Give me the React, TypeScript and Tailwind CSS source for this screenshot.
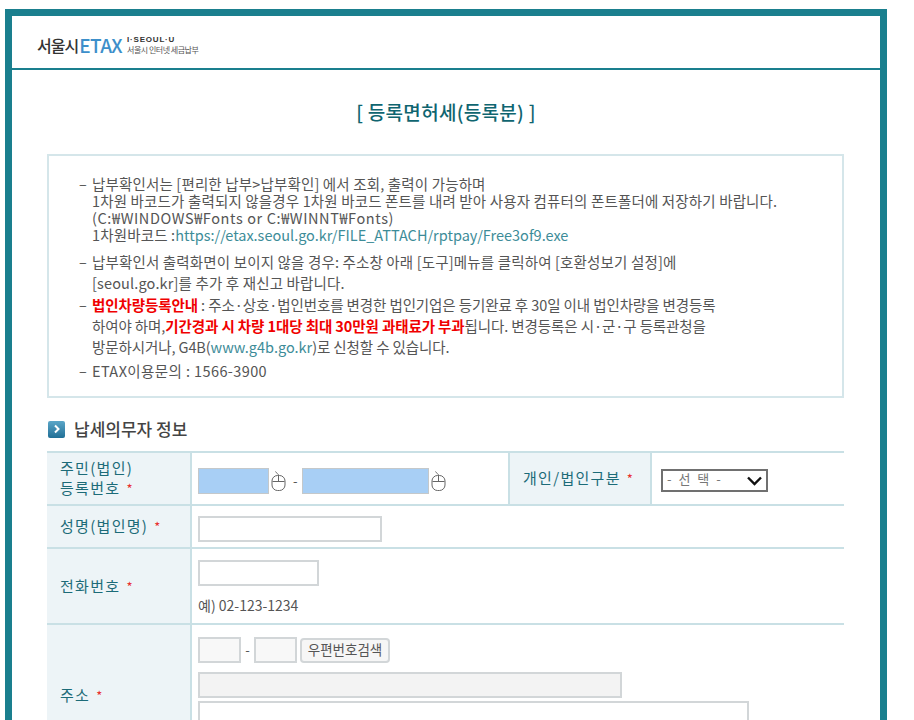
import React from "react";

const Star = () => <span className="text-[#e8312f] text-[13px] ml-1.5">*</span>;

const Mouse = () => (
  <svg width="15" height="20" viewBox="0 0 15 20" fill="none" stroke="#666" strokeWidth="1" className="shrink-0">
    <rect x="1" y="4.5" width="13" height="15" rx="5.5" />
    <path d="M1.5 10.5H13.5M7.5 4.5V10.5M7.5 4.5C7.5 2.5 5.5 2.5 4.5 0.5" />
  </svg>
);

const th = "bg-[#edf4f7] border-2 border-[#c9e0e5] border-l-0 text-[#1c6b78] text-[15px] font-normal text-left pl-[13px] tracking-[1.3px] leading-[20px]";
const td = "border-2 border-[#c9e0e5] border-r-0 align-top pl-[6px]";
const input = "block h-[26px] border-2 border-[#d2d6d8]";

const Dash = () => <span className="w-[13px] shrink-0 tracking-normal">–</span>;

const App = () => {
  return (
    <div className="h-[720px] overflow-hidden bg-white pt-[9px] pl-[5px] pr-[27px] font-['Noto_Sans_CJK_KR','Noto_Sans',sans-serif] text-[#555]">
      <div className="border-[7px] border-b-0 border-[#1a7f8e] h-[800px]">
        <div className="h-[52px] border-b-2 box-content border-[#1a7f8e] flex items-center pl-[25px]">
          <div className="flex items-center mt-[5px]">
            <span className="text-[16px] font-medium text-[#333] tracking-[-1px]">서울시</span>
            <span className="text-[19px] font-medium text-[#3d8fca] ml-px tracking-[-0.6px] leading-none">ETAX</span>
            <div className="ml-[5px] flex flex-col gap-px leading-none">
              <span className="text-[8px] leading-[9px] font-bold text-[#333] font-['Liberation_Sans'] tracking-[0.8px]">I·SEOUL·U</span>
              <span className="text-[8px] leading-[9px] text-[#555] tracking-[-0.5px]">서울시 인터넷 세금납부</span>
            </div>
          </div>
        </div>

        <h1 className="text-center text-[#0f6570] text-[19px] font-medium mt-[28px] leading-[28px] tracking-[0.3px]">[ 등록면허세(등록분) ]</h1>

        <div className="ml-[35px] mr-[36px] mt-[28px] h-[244px] border-2 border-[#d5e6ea] pl-[30px] pt-[19px] text-[14.5px] leading-[17px] tracking-[0.15px]">
          <ul>
            <li className="flex">
              <Dash />
              <div>
                납부확인서는 [편리한 납부&gt;납부확인] 에서 조회, 출력이 가능하며<br />
                1차원 바코드가 출력되지 않을경우 1차원 바코드 폰트를 내려 받아 사용자 컴퓨터의 폰트폴더에 저장하기 바랍니다.<br />
                <span className="tracking-[0.6px]">(C:₩WINDOWS₩Fonts or C:₩WINNT₩Fonts)</span><br />
                1차원바코드 :<span className="text-[#3d8c98] tracking-[0px]">https://etax.seoul.go.kr/FILE_ATTACH/rptpay/Free3of9.exe</span>
              </div>
            </li>
            <li className="flex mt-[8px] leading-[21px]">
              <Dash />
              <div>
                납부확인서 출력화면이 보이지 않을 경우: 주소창 아래 [도구]메뉴를 클릭하여 [호환성보기 설정]에<br />
                [seoul.go.kr]를 추가 후 재신고 바랍니다.
              </div>
            </li>
            <li className="flex mt-px leading-[21px] tracking-[-0.1px]">
              <Dash />
              <div>
                <b className="text-[#f00000]">법인차량등록안내</b> : 주소·상호·법인번호를 변경한 법인기업은 등기완료 후 30일 이내 법인차량을 변경등록<br />
                하여야 하며,<b className="text-[#f00000]">기간경과 시 차량 1대당 최대 30만원 과태료가 부과</b>됩니다. 변경등록은 시·군·구 등록관청을<br />
                방문하시거나, G4B(<span className="text-[#3d8c98] tracking-[0px]">www.g4b.go.kr</span>)로 신청할 수 있습니다.
              </div>
            </li>
            <li className="flex mt-[3px] leading-[22px] tracking-[0.4px]">
              <Dash />
              <div>ETAX이용문의 : 1566-3900</div>
            </li>
          </ul>
        </div>

        <div className="flex items-center ml-[36px] mt-[19px] h-[24px]">
          <span className="w-[17px] h-[17px] rounded-[2px] bg-linear-to-b from-[#5aa6c8] to-[#1f6f96] flex items-center justify-center">
            <svg width="8" height="10" viewBox="0 0 8 10" fill="none" stroke="#fff" strokeWidth="2">
              <path d="M2 1.5L5.5 5L2 8.5" />
            </svg>
          </span>
          <h2 className="ml-[9px] text-[17px] font-medium text-[#444]">납세의무자 정보</h2>
        </div>

        <table className="ml-[35px] mt-[10px] w-[797px] table-fixed border-collapse">
          <colgroup>
            <col className="w-[144px]" />
            <col className="w-[318px]" />
            <col className="w-[142px]" />
            <col />
          </colgroup>
          <tbody>
            <tr className="h-[53px]">
              <th className={th}>
                주민(법인)<br />등록번호<Star />
              </th>
              <td className={`${td} !align-middle pt-[4px]`}>
                <div className="flex items-center">
                  <span className="block w-[71px] h-[26px] border border-[#c4c8ca] bg-[#a8cff5]" />
                  <span className="ml-0.5"><Mouse /></span>
                  <span className="ml-[7px] mr-[4px] text-[13px]">-</span>
                  <span className="block w-[127px] h-[26px] border border-[#c4c8ca] bg-[#a8cff5]" />
                  <span className="ml-0.5"><Mouse /></span>
                </div>
              </td>
              <th className={`${th} border-l-2`}>
                개인/법인구분<Star />
              </th>
              <td className={`${td} !align-middle !pl-[9px] pt-[4px]`}>
                <div className="w-[107px] h-[23px] border-2 border-[#707070] bg-white flex items-center justify-between pl-1 pr-1 text-[13px] text-[#777] tracking-[2px] leading-none">
                  <span className="-mt-1">- 선 택 -</span>
                  <svg width="15" height="10" viewBox="0 0 15 10" fill="none" stroke="#111" strokeWidth="2.4">
                    <path d="M1 1.5L7.5 8L14 1.5" />
                  </svg>
                </div>
              </td>
            </tr>
            <tr className="h-[43px]">
              <th className={th}>
                성명(법인명)<Star />
              </th>
              <td className={`${td} !align-middle pt-[4px]`} colSpan={3}>
                <span className={`${input} w-[184px] bg-white`} />
              </td>
            </tr>
            <tr className="h-[76px]">
              <th className={th}>
                전화번호<Star />
              </th>
              <td className={`${td} pt-[11px]`} colSpan={3}>
                <span className={`${input} w-[121px] bg-white`} />
                <p className="mt-[9px] text-[14px] leading-[20px]">예) 02-123-1234</p>
              </td>
            </tr>
            <tr className="h-[142px]">
              <th className={th}>
                주소<Star />
              </th>
              <td className={`${td} pt-[12px]`} colSpan={3}>
                <div className="flex items-center">
                  <span className={`${input} w-[43px] bg-[#f8f8f8]`} />
                  <span className="mx-[3px] w-[7px] text-center text-[13px]">-</span>
                  <span className={`${input} w-[43px] bg-[#f8f8f8]`} />
                  <button className="ml-[3px] w-[90px] h-[25px] border-2 border-[#d2d6d8] rounded-[4px] bg-[#f6f6f6] text-[13.5px] text-[#555] leading-none">
                    우편번호검색
                  </button>
                </div>
                <span className={`${input} w-[424px] mt-[9px] bg-[#f3f3f3]`} />
                <span className={`${input} w-[551px] mt-[3px] bg-white`} />
              </td>
            </tr>
          </tbody>
        </table>
      </div>
    </div>
  );
};

export default App;
